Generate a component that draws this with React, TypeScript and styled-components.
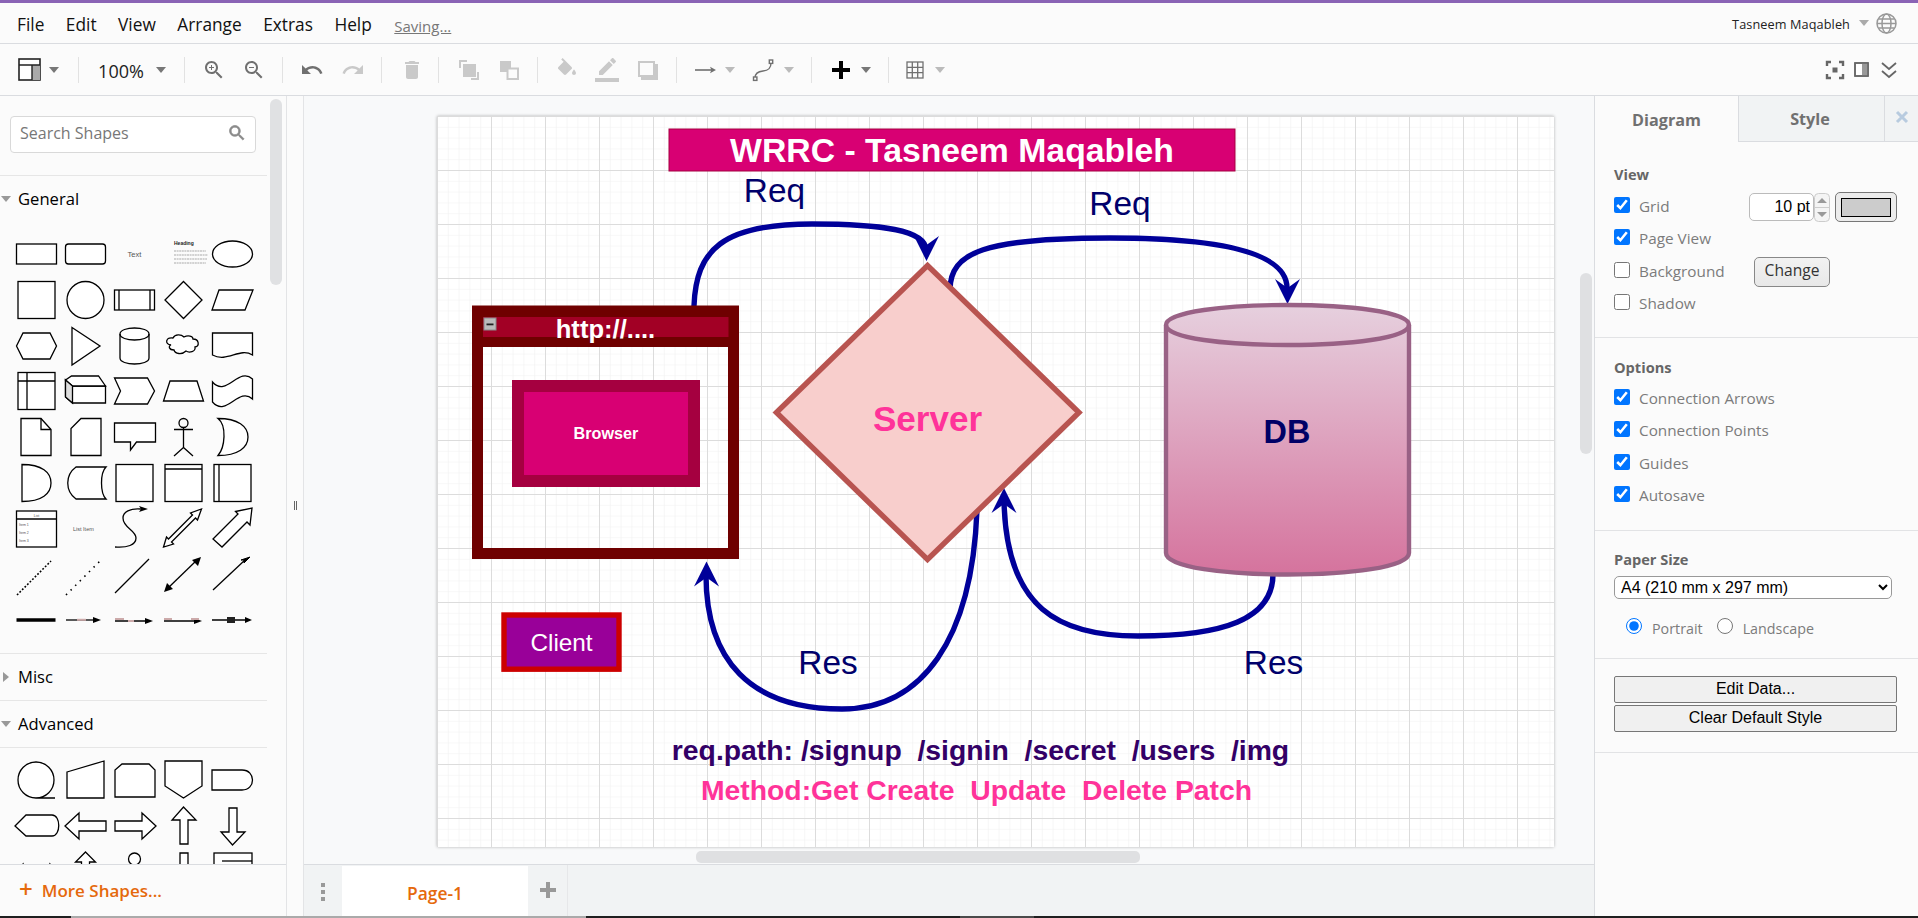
import React from 'react';
import styled, { createGlobalStyle } from 'styled-components';

const UI = `"Open Sans", "Noto Sans", sans-serif`;
const ARIAL = `"Liberation Sans", Arial, sans-serif`;

const Global = createGlobalStyle`
  html, body { margin: 0; padding: 0; width: 1918px; height: 918px; overflow: hidden; background: #fbfbfb; }
  * { box-sizing: border-box; }
`;

const Shell = styled.div`
  width: 1918px; height: 918px; display: flex; flex-direction: column; font-family: ${UI}; overflow: hidden;
`;
const PurpleBar = styled.div`height: 3px; background: #8a63b5; flex: none;`;
const MenuBar = styled.div`
  height: 41px; flex: none; display: flex; align-items: center; padding: 0 0 0 17px; gap: 21.5px;
  background: #fbfbfb; border-bottom: 1px solid #dadce0;
`;
const MenuItem = styled.span`font-size: 17.3px; color: #111; line-height: 20px; margin-top: 3px;`;
const SavingLink = styled.span`font-size: 15px; color: #777; text-decoration: underline; margin-left: 1px; margin-top: 5px;`;
const UserBox = styled.div`margin-left: auto; display: flex; align-items: center; padding-right: 21px;`;
const UserName = styled.span`font-size: 12.7px; color: #222; letter-spacing: .1px; margin-top: 2px;`;
const UserCaret = styled.span`
  display: block; width: 0; height: 0; margin: 0 7px 0 9px; border-left: 5.5px solid transparent; border-right: 5.5px solid transparent; border-top: 6px solid #aaa;
`;

const ToolBar = styled.div`
  height: 52px; flex: none; display: flex; align-items: center; background: #fbfbfb; border-bottom: 1px solid #dadce0;
`;
const ToolSlot = styled.div<{ $w: number; $ml: number }>`
  flex: none; width: ${p => p.$w}px; margin-left: ${p => p.$ml}px; display: flex; align-items: center; justify-content: center;
`;
const Caret = styled.span<{ $c?: string }>`
  display: block; width: 0; height: 0; border-left: 5.5px solid transparent; border-right: 5.5px solid transparent;
  border-top: 6px solid ${p => p.$c || '#777'};
`;
const Sep = styled.div`width: 1px; height: 26px; background: #e2e2e2;`;
const ZoomText = styled.span`font-size: 18px; color: #222; margin-top: 3px; white-space: nowrap;`;

const Main = styled.div`flex: 1; min-height: 0; display: flex;`;
const LeftPanel = styled.aside`
  width: 287px; flex: none; display: flex; flex-direction: column; position: relative; background: #fbfbfb; border-right: 1px solid #e3e4e6;
`;
const LeftScroll = styled.div`flex: 1; min-height: 0; overflow: hidden; padding-top: 20px;`;
const ThumbLeft = styled.div`position: absolute; left: 270px; top: 3px; width: 12px; height: 186px; border-radius: 6px; background: #e0e1e3;`;
const SearchBox = styled.div`
  width: 246px; height: 37px; margin-left: 10px; margin-bottom: 22px; border: 1px solid #d9d9d9; border-radius: 4px; background: #fff;
  display: flex; align-items: center; justify-content: space-between; padding: 0 8px 3px 9px;
`;
const SearchLabel = styled.span`font-size: 16px; color: #777;`;
const Section = styled.div`width: 267px; height: 47px; display: flex; align-items: center; gap: 6px; border-top: 1px solid #e6e6e6; padding-left: 1px;`;
const SectionLast = styled(Section)`border-bottom: 1px solid #e6e6e6; height: 48px;`;
const SectionTitle = styled.span`font-size: 16.6px; color: #000; line-height: 20px; margin-left: 1px;`;
const CaretDown = styled.span`display: block; width: 0; height: 0; border-left: 5px solid transparent; border-right: 5px solid transparent; border-top: 6px solid #999;`;
const CaretRight = styled.span`display: block; width: 0; height: 0; margin: 0 2px; border-top: 5px solid transparent; border-bottom: 5px solid transparent; border-left: 6px solid #999;`;
const ShapeGrid = styled.div`display: grid; grid-template-columns: repeat(5, 49px); grid-auto-rows: 45.8px; padding: 9px 0 0 12px; height: 431px;`;
const ShapeGridAdv = styled(ShapeGrid)`height: auto; padding-top: 9px;`;
const ShapeIcon = styled.svg`width: 49px; height: 46px; display: block; overflow: visible;`;
const MoreBar = styled.div`
  height: 52px; flex: none; border-top: 1px solid #dadce0; background: #fbfbfb; display: flex; align-items: center; padding-left: 19px; gap: 9px;
  color: #e5690c; position: relative; z-index: 1;
`;
const MorePlus = styled.span`font-size: 24px; font-weight: 600; line-height: 20px; margin-top: -3px;`;
const MoreText = styled.span`font-size: 17px; font-weight: 600;`;
const Splitter = styled.div`width: 17px; flex: none; background: #fbfbfb; border-right: 1px solid #e3e4e6; display: flex; align-items: center; justify-content: center; gap: 1px;`;
const Grip = styled.span`display: block; width: 1px; height: 9px; background: #666; margin-top: -1px;`;

const Center = styled.div`flex: 1; min-width: 0; display: flex; flex-direction: column;`;
const Canvas = styled.div`flex: 1; min-height: 0; background: #f8f9fa; position: relative; overflow: hidden; padding: 20px 0 0 133px;`;
const PageSheet = styled.svg`display: block; width: 1117px; height: 731px; background: #fff; box-shadow: 0 0 3px rgba(0,0,0,.28);`;
const HThumb = styled.div`position: absolute; left: 392px; bottom: 1px; width: 444px; height: 12px; border-radius: 5px; background: #dfe0e2;`;
const VThumb = styled.div`position: absolute; left: 1276px; top: 177px; width: 12px; height: 181px; border-radius: 6px; background: #dfe0e2;`;
const TabBar = styled.div`height: 52px; flex: none; display: flex; background: #f1f3f4; border-top: 1px solid #dadce0;`;
const TabMenu = styled.div`width: 38px; display: flex; align-items: center; justify-content: center; padding-top: 2px;`;
const PageTab = styled.div`
  width: 186px; margin-top: 1px; background: #fff; color: #e5690c; font-size: 17.4px; font-weight: 600; display: flex; align-items: center; justify-content: center; padding-top: 3px;
`;
const TabAdd = styled.div`width: 40px; display: flex; align-items: center; justify-content: center; border-right: 1px solid #e6e7e9; padding-bottom: 1px;`;

const RightPanel = styled.aside`width: 324px; flex: none; background: #fbfbfb; border-left: 1px solid #dadce0;`;
const Tabs = styled.div`height: 46px; display: flex;`;
const TabActive = styled.div`width: 143px; display: flex; align-items: center; justify-content: center; font-size: 16.2px; font-weight: 700; color: #707070; padding-top: 2px;`;
const TabIdle = styled.div`
  width: 146px; display: flex; align-items: center; justify-content: center; font-size: 16.2px; font-weight: 700; color: #707070;
  background: #f1f3f4; border: 1px solid #dadce0; border-top: 0; border-right: 0; padding-right: 3px;
`;
const TabClose = styled(TabIdle)`flex: 1; width: auto; padding: 0 0 4px;`;
const PanelSection = styled.section<{ $h: number; $pt: number }>`
  height: ${p => p.$h}px; padding: ${p => p.$pt}px 0 0 19px; border-bottom: 1px solid #e2e3e5;
`;
const Heading = styled.div<{ $mb?: number }>`height: 16px; line-height: 16px; font-size: 14.6px; font-weight: 700; color: #666; margin-bottom: ${p => p.$mb ?? 6}px;`;
const OptionRow = styled.label`height: 32.3px; display: flex; align-items: center;`;
const Check = styled.input`width: 16px; height: 16px; margin: 0 9px 0 0; flex: none;`;
const OptionText = styled.span`font-size: 15.3px; color: #7b7b7b; margin-top: 2px;`;
const RowControls = styled.div<{ $mr: number }>`margin-left: auto; margin-right: ${p => p.$mr}px; margin-top: 4px; display: flex; align-items: center;`;
const PtInput = styled.input`
  width: 65px; height: 28px; border: 1px solid #bbb; border-radius: 5px; font-family: ${ARIAL}; font-size: 16px; text-align: right; padding: 0 3px 0 0; color: #000; background: #fff;
`;
const Spinner = styled.svg`width: 16px; height: 29px; display: block; margin-right: 5px;`;
const ColorBtn = styled.div`width: 62px; height: 30px; border: 1px solid #777; border-radius: 5px; background: #ececec; padding: 5px; display: flex; margin-top: -1px;`;
const Swatch = styled.div`flex: 1; background: #ccc; border: 1px solid #000; height: 19px;`;
const ChangeBtn = styled.button`
  width: 76px; height: 30px; border: 1px solid #888; border-radius: 5px; background: linear-gradient(#f2f2f2, #e8e8e8); font-family: ${UI}; font-size: 15.6px; color: #333; padding: 0 0 3px;
`;
const PaperSelect = styled.select`
  display: block; width: 278px; height: 23px; border: 1px solid #999; border-radius: 5px; background: #fff; font-family: ${ARIAL}; font-size: 16px; color: #000; margin-top: 9px; padding: 0 0 0 2px;
`;
const OrientationRow = styled.div`height: 24px; margin-top: 15px; padding-left: 12px; display: flex; align-items: center;`;
const Radio = styled.input`width: 16px; height: 16px; margin: 0 10px 0 0; flex: none;`;
const RadioLabel = styled(OptionText)`font-size: 14.3px; margin: 4px 14px 0 0;`;
const WideBtn = styled.button`
  display: block; width: 283px; height: 27px; border: 1px solid #777; border-radius: 2px; background: #f0f0f0; font-family: ${ARIAL}; font-size: 16px; color: #000; padding: 0 0 2px; margin-bottom: 2px;
`;
const TaskStrip = styled.div`height: 2px; flex: none; display: flex; background: #1f1f1f;`;
const StripSeg = styled.div<{ $w: number; $c: string }>`width: ${p => p.$w}px; background: ${p => p.$c};`;

const G = '#707070';
const D = '#c9c9c9';

const Mi = ({ d, c = G, s = 24, extra }: { d: string; c?: string; s?: number; extra?: React.ReactNode }) => (
  <svg width={s} height={s} viewBox="0 0 24 24" fill={c}><path d={d} />{extra}</svg>
);

const ZOOMBASE = 'M15.5 14h-.79l-.28-.27C15.41 12.59 16 11.11 16 9.5 16 5.91 13.09 3 9.5 3S3 5.91 3 9.5 5.91 16 9.5 16c1.61 0 3.09-.59 4.23-1.57l.27.28v.79l5 4.99L20.49 19l-4.99-5zm-6 0C7.01 14 5 11.99 5 9.5S7.01 5 9.5 5 14 7.01 14 9.5 11.99 14 9.5 14z';

const toolbarItems: [number, number, React.ReactNode][] = [
  [29, 24, <svg width="23" height="23" viewBox="0 0 23 23"><rect x="1" y="1" width="21" height="21" fill="#fff" stroke="#222" strokeWidth="1.6" /><rect x="14" y="7" width="8" height="15" fill="#aaa" /><path d="M1 7h21M14 7v15" stroke="#222" strokeWidth="1.4" fill="none" /></svg>],
  [54, 12, <Caret />],
  [78, 1, <Sep />],
  [121, 48, <ZoomText>100%</ZoomText>],
  [161, 12, <Caret />],
  [184.5, 1, <Sep />],
  [214, 24, <Mi d={ZOOMBASE} extra={<path d="M12 10h-2v2H9v-2H7V9h2V7h1v2h2v1z" />} />],
  [254, 24, <Mi d={ZOOMBASE} extra={<path d="M7 9h5v1H7z" />} />],
  [282.5, 1, <Sep />],
  [312, 24, <Mi d="M12.5 8c-2.65 0-5.05.99-6.9 2.6L2 7v9h9l-3.62-3.62c1.39-1.16 3.16-1.88 5.12-1.88 3.54 0 6.55 2.31 7.6 5.5l2.37-.78C21.08 11.03 17.15 8 12.5 8z" />],
  [353, 24, <Mi c={D} d="M18.4 10.6C16.55 8.99 14.15 8 11.5 8c-4.65 0-8.58 3.03-9.96 7.22L3.9 16c1.05-3.19 4.05-5.5 7.6-5.5 1.95 0 3.73.72 5.12 1.88L13 16h9V7l-3.6 3.6z" />],
  [381.6, 1, <Sep />],
  [412, 24, <Mi c={D} d="M6 19c0 1.1.9 2 2 2h8c1.1 0 2-.9 2-2V7H6v12zM19 4h-3.5l-1-1h-5l-1 1H5v2h14V4z" />],
  [439, 1, <Sep />],
  [469, 24, <svg width="24" height="24" viewBox="0 0 24 24" fill="none"><rect x="6" y="6" width="13" height="13" fill={D} /><path d="M3 10V3h7M14 21h7v-7" stroke={D} strokeWidth="2" /></svg>],
  [509, 24, <svg width="24" height="24" viewBox="0 0 24 24" fill="none"><rect x="3" y="3" width="11" height="11" fill={D} /><rect x="10.5" y="10.5" width="10.5" height="10.5" fill="#fbfbfb" stroke={D} strokeWidth="2" /></svg>],
  [537.6, 1, <Sep />],
  [567, 24, <Mi c={D} d="M16.56 8.94L7.62 0 6.21 1.41l2.38 2.38-5.15 5.15c-.59.59-.59 1.54 0 2.12l5.5 5.5c.29.29.68.44 1.06.44s.77-.15 1.06-.44l5.5-5.5c.59-.58.59-1.53 0-2.12zM19 11.5s-2 2.17-2 3.5c0 1.1.9 2 2 2s2-.9 2-2c0-1.33-2-3.5-2-3.5z" />],
  [607, 24, <Mi c={D} d="M17.75 7L14 3.25l-10 10V17h3.75l10-10zm2.96-2.96c.39-.39.39-1.02 0-1.41L18.37.29c-.39-.39-1.02-.39-1.41 0L15 2.25 18.75 6l1.96-1.96z" extra={<rect x="0" y="20" width="24" height="4" />} />],
  [648, 24, <svg width="24" height="24" viewBox="0 0 24 24" fill="none"><rect x="5" y="6" width="17" height="16" fill={D} /><rect x="3" y="4" width="15" height="14" fill="#fbfbfb" stroke={D} strokeWidth="2" /></svg>],
  [676.7, 1, <Sep />],
  [705, 24, <svg width="24" height="24" viewBox="0 0 24 24"><path d="M2 12h17" stroke={G} strokeWidth="1.6" /><path d="M23 12l-6-3.2 1.4 3.2-1.4 3.2z" fill={G} /></svg>],
  [730, 12, <Caret $c="#bbb" />],
  [764.5, 24, <svg width="24" height="24" viewBox="0 0 24 24" fill="none" stroke={G} strokeWidth="1.4"><path d="M3 20c0-5 3-6.5 8-7 5-.5 8-2 8-8" /><rect x="1.5" y="19" width="3.4" height="3.4" fill="#fbfbfb" /><rect x="17.3" y="2" width="3.4" height="3.4" fill="#fbfbfb" /></svg>],
  [789, 12, <Caret $c="#bbb" />],
  [812, 1, <Sep />],
  [841, 24, <svg width="24" height="24" viewBox="0 0 24 24"><path d="M10 3h4v7h7v4h-7v7h-4v-7H3v-4h7z" fill="#000" /></svg>],
  [866, 12, <Caret />],
  [889, 1, <Sep />],
  [914.7, 20, <svg width="20" height="22" viewBox="0 0 20 22" fill="none" stroke={G} strokeWidth="1.3"><rect x="2" y="3" width="16" height="16" /><path d="M7.3 3v16M12.7 3v16M2 8.3h16M2 13.7h16" /></svg>],
  [940, 12, <Caret $c="#bbb" />],
  [1835, 20, <svg width="20" height="20" viewBox="0 0 20 20" fill="none" stroke="#666" strokeWidth="2.4"><path d="M2 6V2h4M14 2h4v4M2 14v4h4M18 14v4h-4" /><rect x="7.5" y="7.5" width="5" height="5" fill="#666" stroke="none" /></svg>],
  [1862, 20, <svg width="20" height="20" viewBox="0 0 20 20" fill="none" stroke="#666" strokeWidth="1.5"><rect x="3" y="3" width="13" height="13" fill="#fff" /><rect x="10" y="3" width="6" height="13" fill="#999" stroke="none" /><rect x="3" y="3" width="13" height="13" /></svg>],
  [1889, 20, <svg width="20" height="20" viewBox="0 0 20 20" fill="none" stroke="#666" strokeWidth="1.8"><path d="M3 3l7 6 7-6M3 11l7 6 7-6" /></svg>],
];

const ToolbarRow = () => {
  let right = 0;
  return (
    <ToolBar>
      {toolbarItems.map(([c, w, node], i) => {
        const ml = c - w / 2 - right;
        right = c + w / 2;
        return <ToolSlot key={i} $w={w} $ml={ml}>{node}</ToolSlot>;
      })}
    </ToolBar>
  );
};

const S = { fill: '#fff', stroke: '#000', strokeWidth: 1.3 };
const N = { fill: 'none', stroke: '#000', strokeWidth: 1.3 };
const tiny = { fontFamily: ARIAL };

const generalShapes: React.ReactNode[] = [
  <rect x="4.5" y="13" width="40" height="20" {...S} />,
  <rect x="4.5" y="13" width="40" height="20" rx="3" {...S} />,
  <text x="24.5" y="26" fontSize="7.5" textAnchor="middle" fill="#555" {...tiny}>Text</text>,
  <g><text x="15" y="14" fontSize="5" fontWeight="700" fill="#222" {...tiny}>Heading</text><path d="M15 20h32M15 24h34M15 28h33M15 32h32" stroke="#aaa" strokeWidth="1.2" strokeDasharray="2 .6" /></g>,
  <ellipse cx="24.5" cy="23" rx="20" ry="13" {...S} />,

  <rect x="6" y="4.5" width="37" height="37" {...S} />,
  <circle cx="24.5" cy="23" r="18.5" {...S} />,
  <g><rect x="4.5" y="13" width="40" height="20" {...S} /><path d="M9 13v20M40 13v20" {...N} /></g>,
  <path d="M24.5 4.5L43 23 24.5 41.5 6 23z" {...S} />,
  <path d="M11 13h34l-8 20H4z" {...S} />,

  <path d="M11 10h27l6.5 13-6.5 13H11L4.5 23z" {...S} />,
  <path d="M11 4.5L39 23 11 42z" {...S} />,
  <g><path d="M10 11c0-8 29-8 29 0v24c0 8-29 8-29 0z" {...S} /><path d="M10 11c0 8 29 8 29 0" {...N} /></g>,
  <path d="M12 22c-7-1-5-8 2-7 2-4 8-4 11-1 4-2 9-1 9 2 6 0 7 7 2 8 1 5-6 6-9 4-4 4-11 3-12-1-5 0-6-4-3-5z" {...S} />,
  <path d="M4.5 10h40v22c-13-8-25 8-40 0z" {...S} />,

  <g><rect x="6" y="4.5" width="37" height="37" {...S} /><path d="M6 13h37M15 4.5v37" {...N} /></g>,
  <g><path d="M4.5 12l7 6h33v17h-33l-7-6z" {...S} /><path d="M4.5 12l6-4h27l7 10h-33z" {...S} /><path d="M4.5 12l7 6v17l-7-6z" fill="#ddd" stroke="#000" strokeWidth="1.3" /></g>,
  <path d="M4.5 10h33l7 13-7 13h-33l6-13z" {...S} />,
  <path d="M11 13h27l6.5 20H4.5z" {...S} />,
  <path d="M4.5 14c14 16 26-16 40-3v20c-14-13-26 19-40 3z" {...S} />,

  <g><path d="M9 4.5h20l10 11v26H9z" {...S} /><path d="M29 4.5v11h10" {...N} /></g>,
  <path d="M20 4.5h20v37H10v-27z" {...S} />,
  <path d="M4.5 9h41v19h-19l-6 8v-8H4.5z" {...S} />,
  <g {...N}><circle cx="24.5" cy="9" r="4.5" /><path d="M24.5 13.5v20M15 15.5h19M24.5 33.5L15 42M24.5 33.5L34 42" /></g>,
  <path d="M10 4.5c20 0 30 8 30 18.5s-10 18.5-30 18.5c7-8 9-30 0-37z" {...S} />,

  <path d="M10 4.5c20 0 29 8 29 18.5s-9 18.5-29 18.5z" {...S} />,
  <path d="M15 7h30c-6 6-6 26 0 32H15c-11-8-11-24 0-32z" {...S} />,
  <rect x="6" y="4.5" width="37" height="37" {...S} />,
  <g><rect x="6" y="4.5" width="37" height="37" {...S} /><path d="M6 9h37" {...N} /></g>,
  <g><rect x="6" y="4.5" width="37" height="37" {...S} /><path d="M11 4.5v37" {...N} /></g>,

  <g><rect x="4.5" y="5" width="40" height="36" {...S} /><path d="M4.5 13h40" {...N} /><text x="24.5" y="10.500" fontSize="3.5" textAnchor="middle" fill="#555" {...tiny}>List</text><text x="7" y="20" fontSize="3.5" fill="#555" {...tiny}>Item 1</text><text x="7" y="28" fontSize="3.5" fill="#555" {...tiny}>Item 2</text><text x="7" y="36" fontSize="3.5" fill="#555" {...tiny}>Item 3</text></g>,
  <text x="12" y="25" fontSize="5.5" fill="#555" {...tiny}>List Item</text>,
  <g><path d="M5 41c12 1 21-2 21-9 0-8-13-10-13-20 0-6 7-10 18-9" {...N} /><path d="M38 3l-9-3 2 3-2 3z" fill="#000" /></g>,
  <g fill="#fff" stroke="#000" strokeWidth="1.3"><path d="M4.5 41l3-10 2 2 24-24-2-2 11-4-4 11-2-2-24 24 2 2z" /></g>,
  <path d="M5 33l25-25-2.5-2.5L44 2l-2 17-3-3-25 25z" {...S} />,

  <path d="M5 43L39 9" stroke="#000" strokeWidth="1.6" strokeDasharray="1.8 1.8" />,
  <path d="M5 43L39 9" stroke="#000" strokeWidth="1.6" strokeDasharray="1.5 5" />,
  <path d="M5 41L39 7" stroke="#000" strokeWidth="1.3" />,
  <g><path d="M8 37L38 8" stroke="#000" strokeWidth="1.3" /><path d="M5 40l9-3-6-6zM42 5l-9 3 6 6z" fill="#000" /></g>,
  <g><path d="M5 38L37 8" stroke="#000" strokeWidth="1.3" /><path d="M42 5l-9 3 3 0 0 3z" fill="#000" stroke="#000" /></g>,

  <path d="M4.5 23h39" stroke="#000" strokeWidth="3.5" />,
  <g><path d="M5 23h31" stroke="#000" strokeWidth="1.3" /><path d="M40 23l-8-3v6z" fill="#000" /><rect x="16" y="21.8" width="9" height="2" fill="#caa" /></g>,
  <g><path d="M5 24h35" stroke="#000" strokeWidth="1.3" /><path d="M43 24l-8-3v6z" fill="#000" /><rect x="5" y="21" width="9" height="2" fill="#caa" /><rect x="18" y="23" width="6" height="2" fill="#caa" /></g>,
  <g><path d="M5 24h35" stroke="#000" strokeWidth="1.3" /><path d="M43 24l-8-3v6z" fill="#000" /><rect x="5" y="21" width="8" height="2" fill="#caa" /><rect x="32" y="21" width="8" height="2" fill="#caa" /></g>,
  <g><path d="M4 23h37" stroke="#000" strokeWidth="1.3" /><path d="M44 23l-7-3v6z" fill="#000" /><rect x="19" y="20" width="8" height="6" fill="#222" /></g>,
];

const advancedShapes: React.ReactNode[] = [
  <path d="M24 41c-10 0-18-8-18-18S14 5 24 5s18 8 18 18-8 18-18 18h19" {...S} />,
  <path d="M6 15L43 4v37H6z" {...S} />,
  <path d="M12 7h27l6 6v27H5V13z" {...S} />,
  <path d="M6 4h37v25L24.5 41 6 29z" {...S} />,
  <path d="M4 13h30c14 0 14 20 0 20H4z" {...S} />,
  <path d="M3 23l11-11h26c9 0 9 21 0 21H14z" {...S} />,
  <path d="M4 23l14-13v8h27v10H18v8z" {...S} />,
  <path d="M46 23L32 10v8H5v10h27v8z" {...S} />,
  <path d="M24.5 4L37 17h-8v24h-8V17h-8z" {...S} />,
  <path d="M24.5 42L37 29h-8V5h-8v24h-8z" {...S} />,
  <path d="M3 23l8-8v5h27v-5l8 8-8 8v-5H11v5z" {...S} />,
  <path d="M24.5 3l10 10h-6v20h6l-10 10-10-10h6V13h-6z" {...S} />,
  <g {...S}><circle cx="24.5" cy="10" r="6" /><path d="M19 16h11v25H19z" /></g>,
  <path d="M21 4h8v38h-8z" {...S} />,
  <g><rect x="6" y="4" width="38" height="36" {...S} /><path d="M14 12h30" {...N} /></g>,
];

const SearchGlass = () => (
  <svg width="20" height="20" viewBox="0 0 24 24" fill="#8a8a8a"><path d={ZOOMBASE} stroke="#8a8a8a" strokeWidth=".8" /></svg>
);

const INK = '#000099';
const LABEL = '#00006b';

const Head = ({ x, y, dir }: { x: number; y: number; dir: 'down' | 'up' }) => {
  const s = dir === 'down' ? 1 : -1;
  return <path d={`M${x} ${y}L${x - 12.5} ${y - 25 * s}L${x} ${y - 16 * s}L${x + 12.5} ${y - 25 * s}Z`} fill={INK} />;
};

const Diagram = () => (
  <PageSheet viewBox="437 116 1117 731">
    <defs>
      <pattern id="minor" x="437" y="116" width="10.8" height="10.8" patternUnits="userSpaceOnUse">
        <path d="M0 0H10.8M0 0V10.8" stroke="#f1f1f1" strokeWidth="1.2" fill="none" />
      </pattern>
      <pattern id="major" x="437" y="116" width="54" height="54" patternUnits="userSpaceOnUse">
        <path d="M0 .5H54M.5 0V54" stroke="#dcdcdc" strokeWidth="1" fill="none" />
      </pattern>
      <linearGradient id="dbFill" x1="0" y1="0" x2="0" y2="1">
        <stop offset="0" stopColor="#e6d0de" />
        <stop offset="1" stopColor="#d5739d" />
      </linearGradient>
    </defs>
    <rect x="437" y="116" width="1117" height="731" fill="url(#minor)" />
    <rect x="437" y="116" width="1117" height="731" fill="url(#major)" />

    <g fill="none" stroke={INK} strokeWidth="5.4">
      <path d="M694 306C696 250 722 224 812 224C880 224 926 230 926 250" />
      <path d="M950 290C950 252 985 238 1110 238C1210 238 1287 250 1287 288" />
      <path d="M1273 574C1273 620 1222 636 1138 636C1060 636 1006 610 1004 500" />
      <path d="M977 510C972 640 922 709 842 709C750 709 706 660 706 575" />
    </g>
    <Head x={926.5} y={261} dir="down" />
    <Head x={1287.5} y={304} dir="down" />
    <Head x={1004} y={488} dir="up" />
    <Head x={706.5} y={561.5} dir="up" />

    <rect x="669" y="129" width="566" height="42" fill="#d80073" stroke="#a50040" />
    <text x="952" y="161.5" fontFamily={ARIAL} fontWeight="700" fontSize="33.75" fill="#fff" textAnchor="middle">WRRC - Tasneem Maqableh</text>

    <rect x="477.5" y="311" width="256" height="242.5" fill="none" stroke="#6f0000" strokeWidth="11" />
    <rect x="472" y="306" width="267" height="41" fill="#6f0000" />
    <rect x="483" y="317" width="245.5" height="20" fill="#a20025" />
    <rect x="484" y="318" width="12" height="12" fill="#bbb" stroke="#8a8a8a" />
    <rect x="486.5" y="323.5" width="7" height="1.8" fill="#222" />
    <text x="605.5" y="337.5" fontFamily={ARIAL} fontWeight="700" fontSize="25.6" fill="#fff" textAnchor="middle">http://....</text>
    <rect x="518" y="386" width="176" height="95" fill="#d80073" stroke="#a50040" strokeWidth="12" />
    <text x="606" y="439" fontFamily={ARIAL} fontWeight="700" fontSize="16.2" fill="#fff" textAnchor="middle">Browser</text>

    <path d="M927.5 265.5L1079 412.5L927.5 559.5L776.4 412.5Z" fill="#f8cecc" stroke="#b85450" strokeWidth="5.4" />
    <text x="927.5" y="431" fontFamily={ARIAL} fontWeight="700" fontSize="35.1" fill="#ff3399" textAnchor="middle">Server</text>

    <path d="M1166 325C1166 298.3 1409 298.3 1409 325V553C1409 581.7 1166 581.7 1166 553Z" fill="url(#dbFill)" stroke="#996185" strokeWidth="4.4" />
    <path d="M1166 325C1166 351.7 1409 351.7 1409 325" fill="none" stroke="#996185" strokeWidth="4.4" />
    <text x="1287" y="443" fontFamily={ARIAL} fontWeight="700" fontSize="32.4" fill="#000066" textAnchor="middle">DB</text>

    <rect x="504" y="615" width="115" height="54.2" fill="#990099" stroke="#cc0000" strokeWidth="5.4" />
    <text x="561.5" y="650.5" fontFamily={ARIAL} fontSize="24.3" fill="#fff" textAnchor="middle">Client</text>

    <g fontFamily={ARIAL} fontSize="33.4" fill={LABEL} textAnchor="middle">
      <text x="774.5" y="201.5">Req</text>
      <text x="1120" y="215">Req</text>
      <text x="828" y="674">Res</text>
      <text x="1273.5" y="674">Res</text>
    </g>
    <text x="980.5" y="760" fontFamily={ARIAL} fontWeight="700" fontSize="28.35" fill="#330066" textAnchor="middle">{'req.path: /signup\u00a0 /signin\u00a0 /secret\u00a0 /users\u00a0 /img'}</text>
    <text x="976.5" y="800" fontFamily={ARIAL} fontWeight="700" fontSize="28.35" fill="#ff3399" textAnchor="middle">{'Method:Get Create\u00a0 Update\u00a0 Delete Patch'}</text>
  </PageSheet>
);

const ViewOptions: [string, boolean][] = [['Grid', true], ['Page View', true], ['Background', false], ['Shadow', false]];
const MainOptions = ['Connection Arrows', 'Connection Points', 'Guides', 'Autosave'];

export default function App() {
  return (
    <Shell>
      <Global />
      <PurpleBar />
      <MenuBar>
        {['File', 'Edit', 'View', 'Arrange', 'Extras', 'Help'].map(m => <MenuItem key={m}>{m}</MenuItem>)}
        <SavingLink>Saving...</SavingLink>
        <UserBox>
          <UserName>Tasneem Maqableh</UserName>
          <UserCaret />
          <svg width="21" height="21" viewBox="0 0 21 21" fill="none" stroke="#999" strokeWidth="1.5"><circle cx="10.5" cy="10.5" r="9.5" /><ellipse cx="10.5" cy="10.5" rx="4.5" ry="9.5" /><path d="M1 10.5h19M2.5 6h16M2.500 15h16" /></svg>
        </UserBox>
      </MenuBar>
      <ToolbarRow />
      <Main>
        <LeftPanel>
          <ThumbLeft />
          <LeftScroll>
            <SearchBox><SearchLabel>Search Shapes</SearchLabel><SearchGlass /></SearchBox>
            <Section><CaretDown /><SectionTitle>General</SectionTitle></Section>
            <ShapeGrid>{generalShapes.map((s, i) => <ShapeIcon key={i} viewBox="0 0 49 46">{s}</ShapeIcon>)}</ShapeGrid>
            <Section><CaretRight /><SectionTitle>Misc</SectionTitle></Section>
            <SectionLast><CaretDown /><SectionTitle>Advanced</SectionTitle></SectionLast>
            <ShapeGridAdv>{advancedShapes.map((s, i) => <ShapeIcon key={i} viewBox="0 0 49 46">{s}</ShapeIcon>)}</ShapeGridAdv>
          </LeftScroll>
          <MoreBar><MorePlus>+</MorePlus><MoreText>More Shapes...</MoreText></MoreBar>
        </LeftPanel>
        <Splitter><Grip /><Grip /></Splitter>
        <Center>
          <Canvas>
            <Diagram />
            <HThumb />
            <VThumb />
          </Canvas>
          <TabBar>
            <TabMenu><svg width="6" height="18" viewBox="0 0 6 18" fill="#999"><rect x="1" y="0" width="4" height="4" /><rect x="1" y="7" width="4" height="4" /><rect x="1" y="14" width="4" height="4" /></svg></TabMenu>
            <PageTab>Page-1</PageTab>
            <TabAdd><svg width="18" height="18" viewBox="0 0 18 18" fill="#999"><path d="M7 1h4v6h6v4h-6v6H7v-6H1V7h6z" /></svg></TabAdd>
          </TabBar>
        </Center>
        <RightPanel>
          <Tabs>
            <TabActive>Diagram</TabActive>
            <TabIdle>Style</TabIdle>
            <TabClose><svg width="14" height="14" viewBox="0 0 14 14" stroke="#b8cbdf" strokeWidth="3" fill="none"><path d="M2 2l10 10M12 2L2 12" /></svg></TabClose>
          </Tabs>
          <PanelSection $h={196} $pt={24}>
            <Heading $mb={7}>View</Heading>
            {ViewOptions.map(([label, on], i) => (
              <OptionRow key={label}>
                <Check type="checkbox" defaultChecked={on} />
                <OptionText>{label}</OptionText>
                {i === 0 && (
                  <RowControls $mr={21}>
                    <PtInput defaultValue="10 pt" />
                    <Spinner viewBox="0 0 16 29"><rect x=".5" y=".5" width="15" height="28" rx="4" fill="#f4f4f4" stroke="#ccc" /><path d="M.5 14.5h15" stroke="#ccc" /><path d="M8 5l5 5H3zM8 24l5-5H3z" fill="#999" /></Spinner>
                    <ColorBtn><Swatch /></ColorBtn>
                  </RowControls>
                )}
                {i === 2 && <RowControls $mr={88}><ChangeBtn>Change</ChangeBtn></RowControls>}
              </OptionRow>
            ))}
          </PanelSection>
          <PanelSection $h={193} $pt={21}>
            <Heading>Options</Heading>
            {MainOptions.map(l => (
              <OptionRow key={l}><Check type="checkbox" defaultChecked /><OptionText>{l}</OptionText></OptionRow>
            ))}
          </PanelSection>
          <PanelSection $h={128} $pt={20}>
            <Heading $mb={0}>Paper Size</Heading>
            <PaperSelect defaultValue="a4"><option value="a4">A4 (210 mm x 297 mm)</option></PaperSelect>
            <OrientationRow>
              <Radio type="radio" name="orient" defaultChecked /><RadioLabel>Portrait</RadioLabel>
              <Radio type="radio" name="orient" /><RadioLabel>Landscape</RadioLabel>
            </OrientationRow>
          </PanelSection>
          <PanelSection $h={94} $pt={17}>
            <WideBtn>Edit Data...</WideBtn>
            <WideBtn>Clear Default Style</WideBtn>
          </PanelSection>
        </RightPanel>
      </Main>
      <TaskStrip>
        <StripSeg $w={71} $c="#1f1f1f" />
        <StripSeg $w={515} $c="#aaa" />
        <StripSeg $w={374} $c="#1f1f1f" />
        <StripSeg $w={74} $c="#4a4a4a" />
      </TaskStrip>
    </Shell>
  );
}
